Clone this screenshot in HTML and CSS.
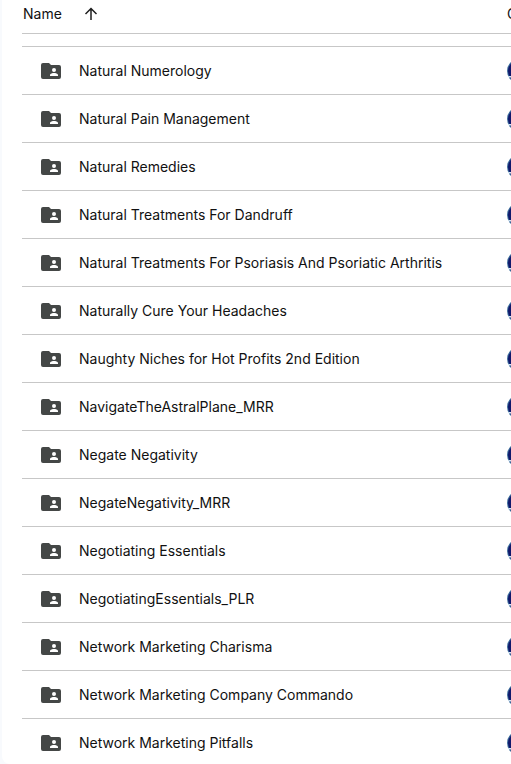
FILE: index.html
```
<!DOCTYPE html>
<html lang="en">
<head>
    <meta charset="UTF-8">
    <meta name="viewport" content="width=device-width, initial-scale=1.0">
    <link rel="stylesheet" href="styles.css">
    <title>Files</title>
</head>
<body>
    <svg class="defs" aria-hidden="true">
        <symbol id="folder" viewBox="0 0 20 16">
            <path fill-rule="evenodd" d="M2 0h6l2 2h8a2 2 0 0 1 2 2v10a2 2 0 0 1-2 2H2a2 2 0 0 1-2-2V2a2 2 0 0 1 2-2zM13 5a2 2 0 1 0 0 4 2 2 0 0 0 0-4zM9 13h8v-1c0-1.400-2.600-2-4-2s-4 .600-4 2z"/>
        </symbol>
        <symbol id="avatar" viewBox="0 0 24 24">
            <circle cx="12" cy="12" r="12" fill="#3c6c9c"/>
            <circle cx="12" cy="12" r="11" fill="#10186b"/>
            <path d="M1 17h22l-1 1.500H2z" fill="#d4e6f4"/>
        </symbol>
    </svg>

    <main class="panel">
        <table class="files">
            <thead>
                <tr>
                    <th class="name" scope="col">
                        <button class="sort" type="button">
                            Name
                            <svg class="arrow" viewBox="0 0 12 12" aria-hidden="true">
                                <path d="M6 12V1M.5 6L6 .5 11.500 6"/>
                            </svg>
                        </button>
                    </th>
                    <th class="owner" scope="col">Owner</th>
                </tr>
            </thead>
            <tbody id="rows">
                <tr class="spacer"><td colspan="2"></td></tr>
            </tbody>
        </table>
    </main>

    <script>
        const folders = [
            'Natural Numerology',
            'Natural Pain Management',
            'Natural Remedies',
            'Natural Treatments For Dandruff',
            'Natural Treatments For Psoriasis And Psoriatic Arthritis',
            'Naturally Cure Your Headaches',
            'Naughty Niches for Hot Profits 2nd Edition',
            'NavigateTheAstralPlane_MRR',
            'Negate Negativity',
            'NegateNegativity_MRR',
            'Negotiating Essentials',
            'NegotiatingEssentials_PLR',
            'Network Marketing Charisma',
            'Network Marketing Company Commando',
            'Network Marketing Pitfalls'
        ];

        const rows = document.getElementById('rows');

        folders.forEach(folder => {
            const row = document.createElement('tr');
            row.innerHTML = `
                <td class="name">
                    <div class="entry">
                        <svg class="folder" aria-hidden="true"><use href="#folder"></use></svg>
                        <span>${folder}</span>
                    </div>
                </td>
                <td class="owner">
                    <svg class="avatar" aria-hidden="true"><use href="#avatar"></use></svg>
                </td>`;
            rows.appendChild(row);
        });
    </script>
</body>
</html>
```
FILE: styles.css
```
* {
    box-sizing: border-box;
}

body {
    height: 100vh;
    margin: 0;
    padding-left: 2px;
    overflow: hidden;
    background-color: #f8fafd;
    font-family: Inter, Roboto, sans-serif;
    font-size: 14px;
    line-height: 20px;
    color: #111111;
}

.defs {
    display: none;
}

.panel {
    height: 100%;
    padding-left: 20px;
    overflow: hidden;
    background-color: #ffffff;
    border-bottom-left-radius: 8px;
}

/* the owner column runs past the right edge of the panel */
.files {
    width: calc(100% + 120px);
    table-layout: fixed;
    border-collapse: separate;
    border-spacing: 0;
}

.files th,
.files td {
    padding: 0;
    border-bottom: 1px solid #c7c7c7;
    font-weight: 400;
    text-align: left;
    vertical-align: middle;
}

.files th {
    height: 34px;
    padding: 4px 0 9px;
}

.files td {
    height: 48px;
}

.files .spacer td {
    height: 13px;
}

.files .owner {
    width: 124px;
}

.sort {
    display: flex;
    align-items: center;
    gap: 23px;
    padding: 0 0 0 1px;
    border: 0;
    background: none;
    font: inherit;
    color: inherit;
    cursor: pointer;
}

.arrow {
    width: 12px;
    height: 12px;
    overflow: visible;
    fill: none;
    stroke: #1f1f1f;
    stroke-width: 1.5;
}

.entry {
    display: flex;
    align-items: center;
    gap: 18px;
    padding-left: 19px;
    white-space: nowrap;
}

.folder {
    width: 20px;
    height: 16px;
    fill: #444746;
}

.avatar {
    display: block;
    width: 24px;
    height: 24px;
}
```
